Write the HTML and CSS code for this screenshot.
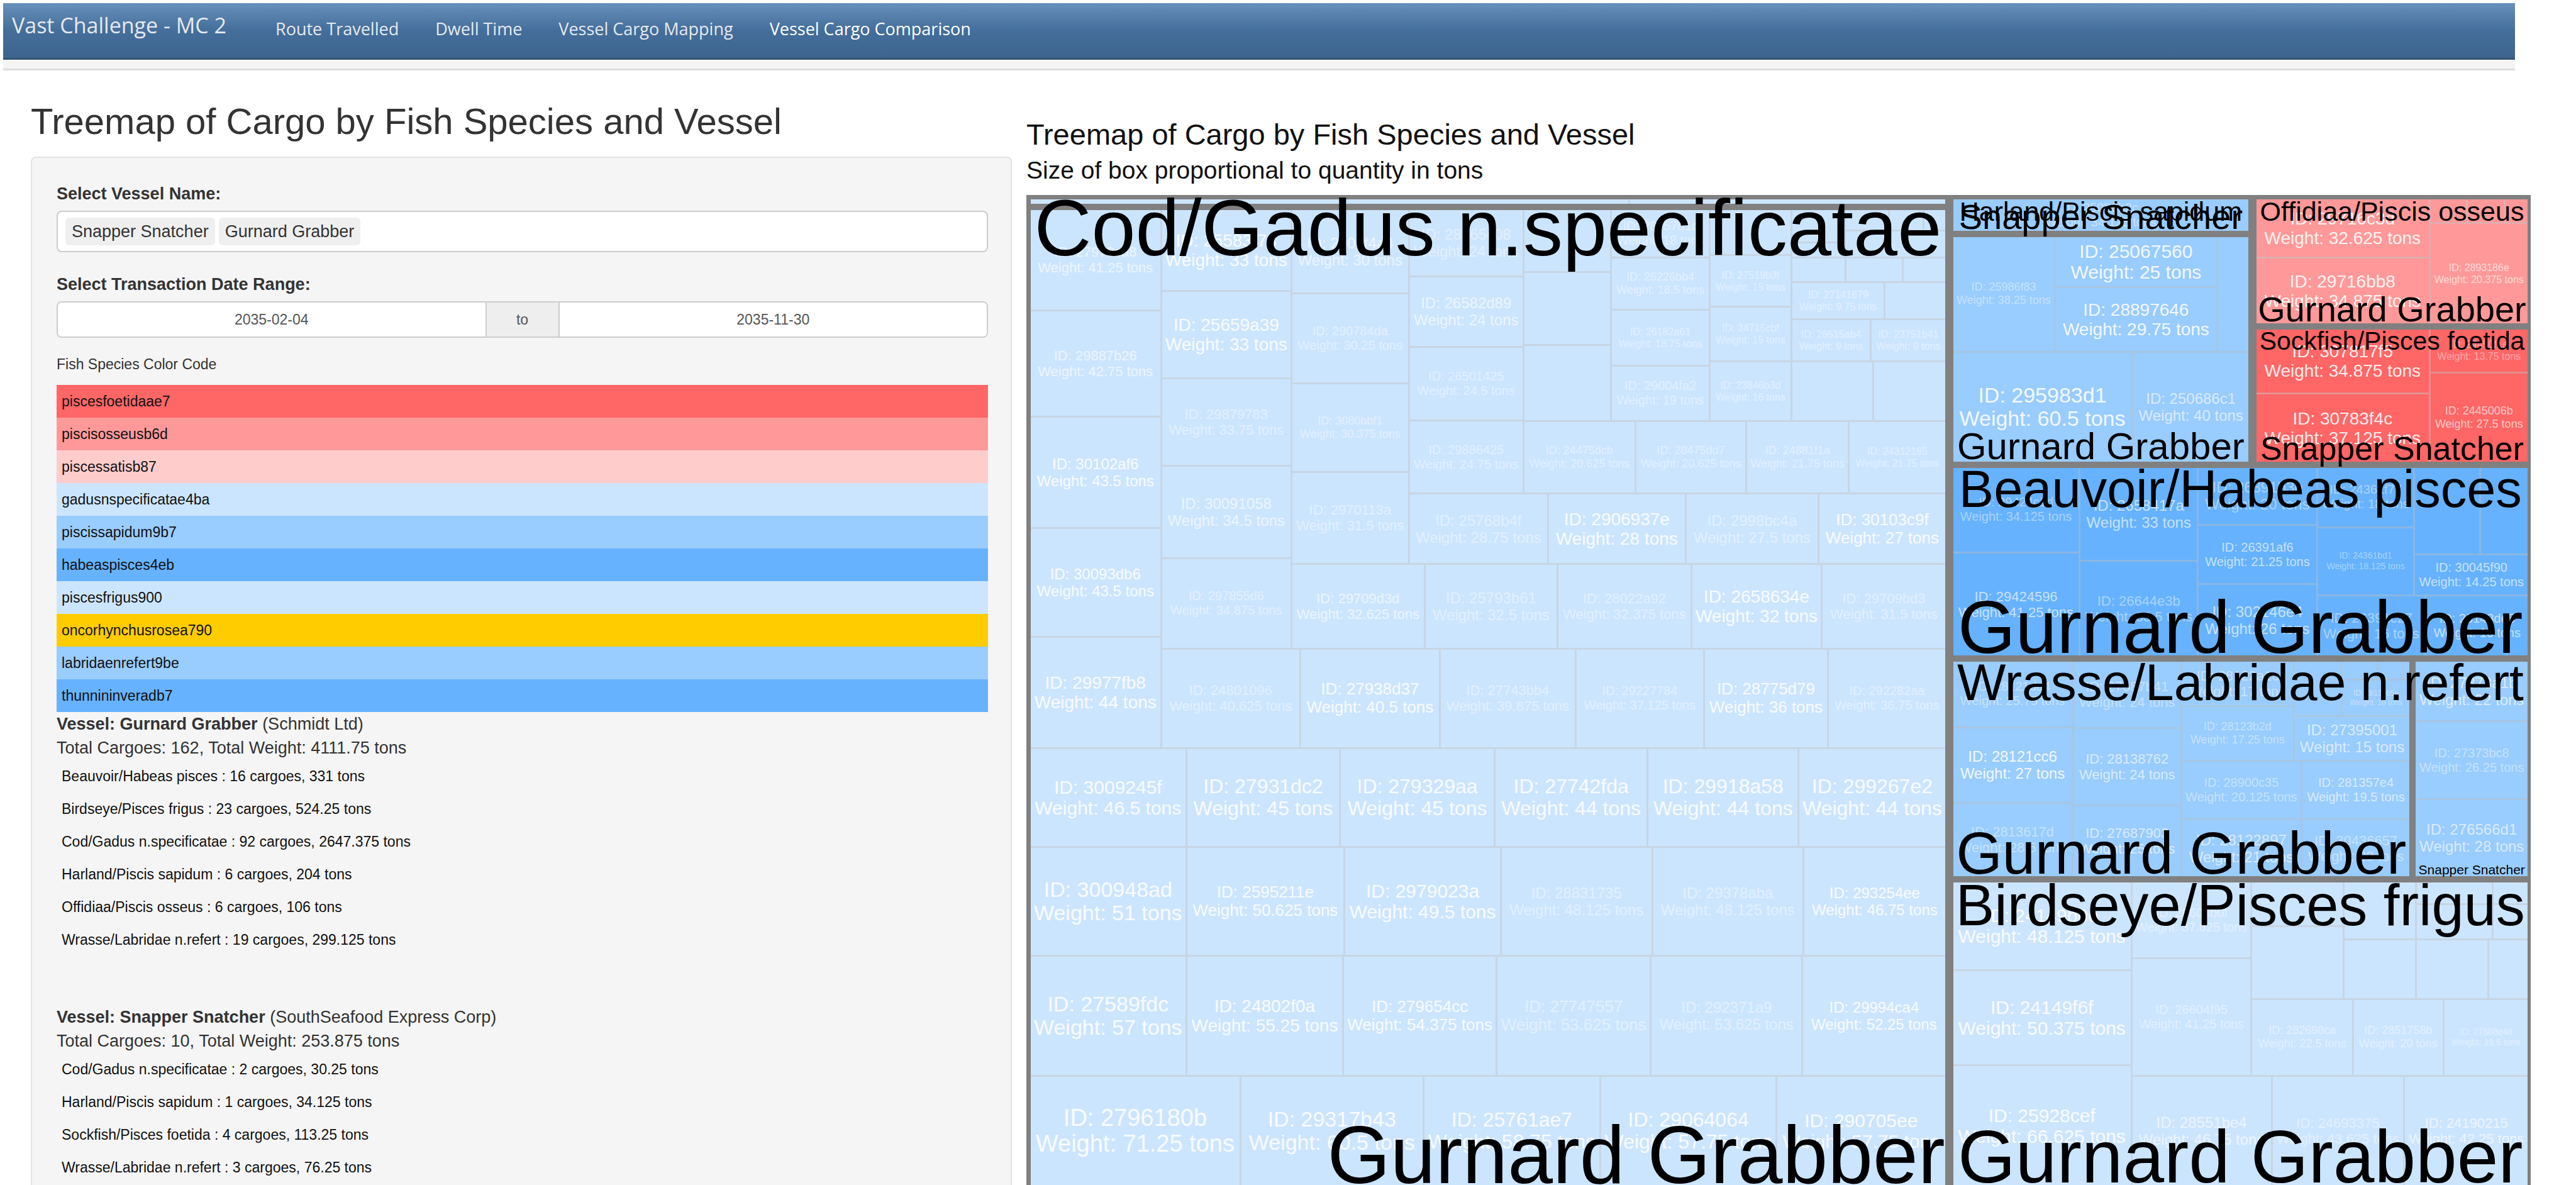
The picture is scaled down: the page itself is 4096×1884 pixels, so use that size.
FILE: index.html
```html
<!DOCTYPE html>
<html lang="en">
<head>
<meta charset="utf-8">
<title>Vast Challenge - MC 2</title>
<link rel="stylesheet" href="styles.css">
</head>
<body>
<header class="site-header">
  <nav class="navbar">
    <a class="brand" href="#">Vast Challenge - MC 2</a>
    <ul class="nav-links">
      <li><a href="#route">Route Travelled</a></li>
      <li><a href="#dwell">Dwell Time</a></li>
      <li><a href="#mapping">Vessel Cargo Mapping</a></li>
      <li><a class="active" href="#comparison">Vessel Cargo Comparison</a></li>
    </ul>
  </nav>
  <div class="tab-strip"></div>
</header>
<main class="content">
  <section class="sidebar">
    <h1 class="page-title">Treemap of Cargo by Fish Species and Vessel</h1>
    <form class="panel">
      <label class="field-label" for="vessel">Select Vessel Name:</label>
      <div class="tag-input">
        <span class="tag">Snapper Snatcher</span>
        <span class="tag">Gurnard Grabber</span>
        <input id="vessel" class="tag-entry" type="text">
      </div>
      <label class="field-label" for="date-from">Select Transaction Date Range:</label>
      <div class="date-range">
        <input id="date-from" class="date" type="text" value="2035-02-04">
        <label class="date-sep" for="date-to">to</label>
        <input id="date-to" class="date" type="text" value="2035-11-30">
      </div>
      <p class="legend-title">Fish Species Color Code</p>
      <ul class="rows legend">
        <li class="red-3">piscesfoetidaae7</li>
        <li class="red-2">piscisosseusb6d</li>
        <li class="red-1">piscessatisb87</li>
        <li class="blue-1">gadusnspecificatae4ba</li>
        <li class="blue-2">piscissapidum9b7</li>
        <li class="blue-3">habeaspisces4eb</li>
        <li class="blue-1">piscesfrigus900</li>
        <li class="gold">oncorhynchusrosea790</li>
        <li class="blue-2">labridaenrefert9be</li>
        <li class="blue-3">thunnininveradb7</li>
      </ul>
      <div class="vessel">
        <p><b>Vessel: Gurnard Grabber</b> (Schmidt Ltd)</p>
        <p>Total Cargoes: 162, Total Weight: 4111.75 tons</p>
        <ul class="rows">
          <li>Beauvoir/Habeas pisces : 16 cargoes, 331 tons</li>
          <li>Birdseye/Pisces frigus : 23 cargoes, 524.25 tons</li>
          <li>Cod/Gadus n.specificatae : 92 cargoes, 2647.375 tons</li>
          <li>Harland/Piscis sapidum : 6 cargoes, 204 tons</li>
          <li>Offidiaa/Piscis osseus : 6 cargoes, 106 tons</li>
          <li>Wrasse/Labridae n.refert : 19 cargoes, 299.125 tons</li>
        </ul>
      </div>
      <div class="vessel">
        <p><b>Vessel: Snapper Snatcher</b> (SouthSeafood Express Corp)</p>
        <p>Total Cargoes: 10, Total Weight: 253.875 tons</p>
        <ul class="rows">
          <li>Cod/Gadus n.specificatae : 2 cargoes, 30.25 tons</li>
          <li>Harland/Piscis sapidum : 1 cargoes, 34.125 tons</li>
          <li>Sockfish/Pisces foetida : 4 cargoes, 113.25 tons</li>
          <li>Wrasse/Labridae n.refert : 3 cargoes, 76.25 tons</li>
        </ul>
      </div>
    </form>
  </section>
  <section class="chart">
    <h2 class="chart-title">Treemap of Cargo by Fish Species and Vessel</h2>
    <p class="chart-subtitle">Size of box proportional to quantity in tons</p>
    <div class="treemap" id="treemap"></div>
  </section>
</main>
<script src="treemap.js"></script>
</body>
</html>
```
FILE: styles.css
```css
* { box-sizing: border-box; }

body {
  margin: 0;
  min-height: 100vh;
  display: flex;
  flex-direction: column;
  background: #fff;
  color: #333;
  font-family: "Liberation Sans", Arial, sans-serif;
  font-size: 27px;
  line-height: 38px;
}

h1, h2, p, ul { margin: 0; padding: 0; font-weight: 400; }
ul { list-style: none; }

/* header */
.site-header { margin: 5px 97px 0 5px; }
.navbar {
  display: flex;
  align-items: flex-start;
  gap: 78px;
  height: 90px;
  padding: 0 14px;
  background: linear-gradient(#6790bb, #446e9b 50%, #3e648d);
  border-bottom: 3px solid #345578;
  font-family: "Open Sans", "Noto Sans", sans-serif;
}
.navbar a { color: #e6e9ee; text-decoration: none; }
.brand { font-size: 34px; line-height: 70px; }
.nav-links { display: flex; gap: 58px; font-size: 27px; line-height: 82px; }
.navbar a.active { color: #fff; }
.tab-strip {
  height: 15px;
  margin-top: 2px;
  background: #f4f4f4;
  border-bottom: 3px solid #ddd;
}

/* page */
.content {
  flex: 1;
  display: grid;
  grid-template-columns: minmax(0, 1560fr) minmax(0, 2392fr);
  column-gap: 23px;
  padding: 51px 72px 0 49px;
}
.sidebar, .chart { display: flex; flex-direction: column; }
.page-title { margin-bottom: 26px; font-size: 58px; line-height: 60px; }

.panel {
  flex: 1;
  padding: 38px 36px 0 39px;
  background: #f5f5f5;
  border: 2px solid #e3e3e3;
  border-bottom: 0;
  border-radius: 8px 8px 0 0;
}
.field-label { display: block; margin-bottom: 8px; font-weight: 700; }
.tag-input {
  display: flex;
  align-items: center;
  gap: 6px;
  height: 66px;
  margin-bottom: 32px;
  padding: 0 12px;
  background: #fff;
  border: 2px solid #ccc;
  border-radius: 8px;
}
.tag {
  padding: 0 10px;
  background: #efefef;
  border-radius: 6px;
  line-height: 44px;
}
.tag-entry { flex: 1; min-width: 0; border: 0; outline: 0; font: inherit; }
.date-range {
  display: flex;
  height: 58px;
  margin-bottom: 25px;
  border: 2px solid #ccc;
  border-radius: 8px;
  overflow: hidden;
  font-size: 23px;
  line-height: 54px;
  color: #555;
}
.date {
  flex: 1;
  min-width: 0;
  border: 0;
  background: #fff;
  font: inherit;
  color: inherit;
  text-align: center;
}
.date-sep {
  width: 118px;
  background: #eee;
  border: solid #ccc;
  border-width: 0 2px;
  text-align: center;
}
.legend-title { margin-bottom: 16px; font-size: 23px; line-height: 34px; }
.rows { font-size: 23px; line-height: 52px; color: #111; }
.rows li { padding: 0 8px; }
.vessel + .vessel { margin-top: 78px; }

/* species colours; --line is the rule between shipments */
.red-3 { background: #f66; --line: #e58f8f; }
.red-2 { background: #f99; --line: #e3acac; }
.red-1 { background: #fcc; --line: #e3c4c4; }
.blue-1 { background: #cce5ff; --line: #c7d5e3; }
.blue-2 { background: #9cf; --line: #a6c6e4; }
.blue-3 { background: #66b2ff; --line: #8ab7e3; }
.gold { background: #fc0; --line: #dcc25a; }

/* chart */
.chart { padding-top: 23px; color: #111; }
.chart-title { margin-bottom: 7px; font-size: 47px; line-height: 56px; }
.chart-subtitle { margin-bottom: 17px; font-size: 39px; line-height: 44px; }
.treemap {
  flex: 1;
  display: flex;
  border: solid #808080;
  border-width: 7px 5px 0 7px;
  background: #808080;
  color: #000;
}
.row, .col, .cell { position: relative; display: flex; min-width: 0; min-height: 0; }
.row { flex-direction: row; }
.col { flex-direction: column; }
.wide { gap: 13px; }
.group { gap: 10px; }
.tiles, .tiles .row, .tiles .col { gap: 3px; }
.tiles .cell { overflow: hidden; }
.cell {
  flex-direction: column;
  align-items: center;
  justify-content: center;
  color: rgba(255, 255, 255, 0.9);
  white-space: nowrap;
}
.soft { color: rgba(255, 255, 255, 0.65); }
.faint { color: rgba(255, 255, 255, 0.45); }

/* names written over the groups */
.name {
  position: absolute;
  left: 0;
  right: 0;
  z-index: 1;
  text-align: center;
  white-space: nowrap;
}
.name.top { top: 4px; }
.name.bottom { bottom: 3px; }
.name.end { text-align: right; }
.n129 { font-size: 129px; line-height: 90px; }
.n126 { font-size: 126px; line-height: 84px; }
.n118 { font-size: 118px; line-height: 83px; }
.n94 { font-size: 94px; line-height: 66px; }
.n92 { font-size: 92px; line-height: 64px; }
.n83 { font-size: 83px; line-height: 59px; }
.n82 { font-size: 82px; line-height: 57px; }
.n60 { font-size: 60px; line-height: 42px; }
.n56 { font-size: 56px; line-height: 39px; }
.n52 { font-size: 52px; line-height: 36px; }
.n43 { font-size: 43px; line-height: 30px; }
.n41 { font-size: 41px; line-height: 29px; }
.n21 { font-size: 21px; line-height: 15px; }
```
FILE: treemap.js
```js
// Each box takes a share of its parent: row(share, ...), col(share, ...), t(share, id, tons, tone).
// A share counts the rule beside the box, which the flex gap draws.
const RULE = 3;
function box(cls, share, kids) {
  const el = document.createElement('div');
  el.className = cls;
  el.style.flex = Math.max(1, share - RULE) + ' 1 0';
  kids.forEach(k => el.append(k));
  return el;
}
const row = (share, ...kids) => box('row', share, kids);
const col = (share, ...kids) => box('col', share, kids);

function t(share, id, tons, tone) {
  const el = box('cell ' + (tone || ''), share, []);
  if (id) {
    for (const text of ['ID: ' + id, 'Weight: ' + tons + ' tons']) {
      const line = document.createElement('span');
      line.textContent = text;
      el.append(line);
    }
  }
  return el;
}

function name(text, size, place) {
  const el = document.createElement('div');
  el.className = 'name n' + size + ' ' + place;
  el.textContent = text;
  return el;
}
const as = (cls, el) => { el.classList.add(...cls.split(' ')); return el; };

// A vessel's shipments of one species.
function tiles(colour, el) {
  as('tiles', el);
  el.classList.add(colour);
  el.querySelectorAll('.cell').forEach(c => c.classList.add(colour));
  el.style.background = 'var(--line)';
  return el;
}

const F = 'faint', S = 'soft';

const cod = col(1453,
  tiles('blue-1', row(10, t(951), t(502))),
  tiles('blue-1', col(1553,
    row(856,
      col(208,
        t(160, '27970ca8', '41.25', S), t(169, '29887b26', '42.75', S), t(176, '30102af6', '43.5'),
        t(172, '30093db6', '43.5'), t(176, '29977fb8', '44')),
      col(1245,
        row(697,
          col(207,
            t(130, '25583f78', '33'), t(138, '25659a39', '33'), t(139, '29879783', '33.75', F),
            t(146, '30091058', '34.5', S), t(144, '297855d6', '34.875', F)),
          col(1038,
            row(562,
              col(186,
                t(134, '2906f4a4', '30', S), t(142, '290784da', '30.25', F),
                t(141, '3080bbf1', '30.375', F), t(145, '2970113a', '31.5', F)),
              col(852,
                row(451,
                  col(182,
                    t(107, '28865c08', '24', F), t(111, '26582d89', '24', S),
                    t(117, '26501425', '24.5', F), t(116, '29886425', '24.75', F)),
                  col(670,
                    row(336,
                      col(139, t(100), t(115), t(121)),
                      col(156, t(77, '28557d1c', '18', F), t(83, '26226bb4', '18.5', F),
                        t(88, '26182a61', '18.75', F), t(88, '29004fa2', '19', F)),
                      col(130, t(73), t(81, '27519b3f', '15', F), t(87, '24715cbf', '15', F),
                        t(94, '23846b3d', '16', F)),
                      col(245,
                        row(77, col(85, t(53), t(24)),
                          col(160, row(34, t(70), t(54), t(36)), t(43))),
                        row(39, t(86), t(90), t(69)),
                        row(58, t(148, '27141679', '9.75', F), t(97)),
                        row(67, t(125, '26515ab4', '9', F), t(119, '23751b41', '9', F)),
                        row(95, t(130), t(115)))),
                    row(115, t(177, '24475dcb', '20.625', F), t(176, '28475dd7', '20.625', F),
                      t(162, '24881f1a', '21.75', F), t(154, '24312185', '21.75', F)))),
                row(111, t(221, '25768b4f', '28.75', F), t(218, '2906937e', '28'),
                  t(211, '2998bc4a', '27.5', F), t(202, '30103c9f', '27')))),
            row(135, t(211, '29709d3d', '32.625', S), t(211, '25793b61', '32.5', F),
              t(212, '28022a92', '32.375', F), t(207, '2658634e', '32'), t(197, '29709bd3', '31.5', F)))),
        row(157, t(221, '24801096', '40.625', F), t(221, '27938d37', '40.5'),
          t(216, '27743bb4', '39.875', F), t(203, '29227784', '37.125', F),
          t(197, '28775d79', '36'), t(187, '292282aa', '36.75', F)))),
    row(157, t(248, '3009245f', '46.5'), t(244, '27931dc2', '45'), t(245, '279329aa', '45'),
      t(243, '27742fda', '44'), t(239, '29918a58', '44'), t(234, '299267e2', '44')),
    row(173, t(248, '300948ad', '51'), t(251, '2595211e', '50.625'), t(248, '2979023a', '49.5'),
      t(240, '28831735', '48.125', F), t(240, '29378aba', '48.125', F), t(226, '293254ee', '46.75')),
    row(191, t(248, '27589fdc', '57'), t(249, '24802f0a', '55.25'), t(243, '279654cc', '54.375'),
      t(245, '27747557', '53.625', F), t(240, '292371a9', '53.625', F), t(228, '29994ca4', '52.25')),
    row(175, t(334, '2796180b', '71.25'), t(290, '29317b43', '60.5'), t(281, '25761ae7', '58.75'),
      t(279, '29064064', '57.75'), t(269, '290705ee', '57.75')))),
  name('Cod/Gadus n.specificatae', 126, 'top'),
  name('Gurnard Grabber', 129, 'bottom end'));

const sapidum = col(468,
  tiles('blue-2', row(53, t(4, '25080b2c', '34.125', F))),
  tiles('blue-2', col(358,
    row(181,
      t(162, '25986f83', '38.25', F),
      col(255, t(80, '25067560', '25'), t(101, '28897646', '29.75')),
      t(51)),
    row(174, t(284, '295983d1', '60.5'), t(184, '250686c1', '40', S)))),
  name('Gurnard Grabber', 60, 'bottom'));
sapidum.firstChild.append(name('Harland/Piscis sapidum', 43, 'top'), name('Snapper Snatcher', 56, 'bottom'));

const osseus = tiles('red-2', row(197,
  col(274, t(93, '29716c3d', '32.625'), t(104, '29716bb8', '34.875')),
  col(156, row(38, t(59), t(59), t(38)), t(159, '2893186e', '20.375', S)),
  name('Offidiaa/Piscis osseus', 43, 'top'), name('Gurnard Grabber', 56, 'bottom')));

const foetida = tiles('red-3', row(210,
  col(274, t(102, '307817f5', '34.875'), t(108, '30783f4c', '37.125')),
  col(156, t(69, '24450f1a', '13.75', F), t(141, '2445006b', '27.5', S)),
  name('Sockfish/Pisces foetida', 41, 'top'), name('Snapper Snatcher', 52, 'bottom')));

const beauvoir = tiles('blue-3', row(301,
  col(202, t(135, '29424c1d', '34.125', F), t(164, '29424596', '41.25', S)),
  col(187, t(148, '2658417a', '33', S), t(151, '26644e3b', '33.5', F)),
  col(189, t(91, '26391b3e', '20', F), t(94, '26391af6', '21.25', S), t(114, '302146e4', '26', S)),
  col(335,
    row(202,
      col(154, t(95, '24361f77', '18', F), t(107, '24361bd1', '18.125', F)),
      col(181, row(138, t(104), t(77)), t(64, '30045f90', '14.25', S))),
    row(97, t(172, '26391c27', '16', F), t(163, '28143de5', '16', S))),
  name('Beauvoir/Habeas pisces', 83, 'top'), name('Gurnard Grabber', 118, 'bottom')));

const wrasse = row(343,
  tiles('blue-2', row(726,
    col(191, t(104, '28121dd4', '25.75', F), t(119, '28121cc6', '27'), t(117, '2813617d', '28.5', F)),
    col(172, t(105, '27687b41', '24', F), t(122, '28138762', '24', S), t(113, '27687903', '25', S)),
    col(363,
      row(157,
        col(178, t(71, '28122a1c', '17', F), t(86, '28123b2d', '17.25', F)),
        col(185,
          row(87, t(76), col(109, row(29, t(57), t(39), t(13)), t(58, '28135b5a', '10', F))),
          t(70, '27395001', '15', S))),
      row(183,
        col(190, t(92, '28900c35', '20.125', F), t(91, '28122897', '21', S)),
        col(173, t(92, '281357e4', '19.5', S), t(91, '30436657', '20', F)))),
    name('Gurnard Grabber', 94, 'bottom'))),
  tiles('blue-2', col(180, t(95, '27373a1b', '22', S), t(122, '27373bc8', '26.25', F),
    t(123, '276566d1', '28', S), name('Snapper Snatcher', 21, 'bottom'))),
  name('Wrasse/Labridae n.refert', 82, 'top'));

const birdseye = tiles('blue-1', row(483,
  col(284, t(140, '24149b0e', '48.125'), t(150, '24149f6f', '50.375'), t(190, '25928cef', '66.625')),
  col(629,
    row(306,
      col(190, t(121, '26604b0f', '37.625', F), t(185, '26604f95', '41.25', F)),
      col(439,
        row(185,
          col(146, t(70), t(115)),
          col(293,
            row(91, t(115), col(121, t(36), t(55)), col(57, t(36), t(55))),
            row(94, t(115), t(114), t(64)))),
        row(121, t(161, '282698ca', '22.5', F), t(143, '2851758b', '20', F), t(135, '27508e48', '19.5', F)))),
    row(174, t(222, '28551be4', '46.75', S), t(210, '24693375', '43.625', F), t(197, '24190215', '42.25', S))),
  name('Birdseye/Pisces frigus', 92, 'top'), name('Gurnard Grabber', 118, 'bottom')));

const right = as('group', col(914,
  as('wide', row(419, as('group', sapidum), as('group', col(430, osseus, foetida)))),
  beauvoir, as('group', wrasse), birdseye));

const map = document.getElementById('treemap');
map.classList.add('wide');
map.append(as('group', cod), right);

// Shipment text grows with its box, in steps of two pixels.
function fit() {
  for (const cell of map.querySelectorAll('.cell')) {
    if (!cell.firstChild) continue;
    cell.style.fontSize = '20px';
    const perPixel = cell.lastChild.getBoundingClientRect().width / 20;
    let size = Math.floor((cell.clientWidth - 10) / perPixel / 2) * 2;
    size = Math.max(10, Math.min(size, 38, Math.floor(cell.clientHeight / 5) * 2));
    cell.style.fontSize = size + 'px';
    cell.style.lineHeight = size + 3 + 'px';
  }
}
fit();
addEventListener('resize', fit);
```
